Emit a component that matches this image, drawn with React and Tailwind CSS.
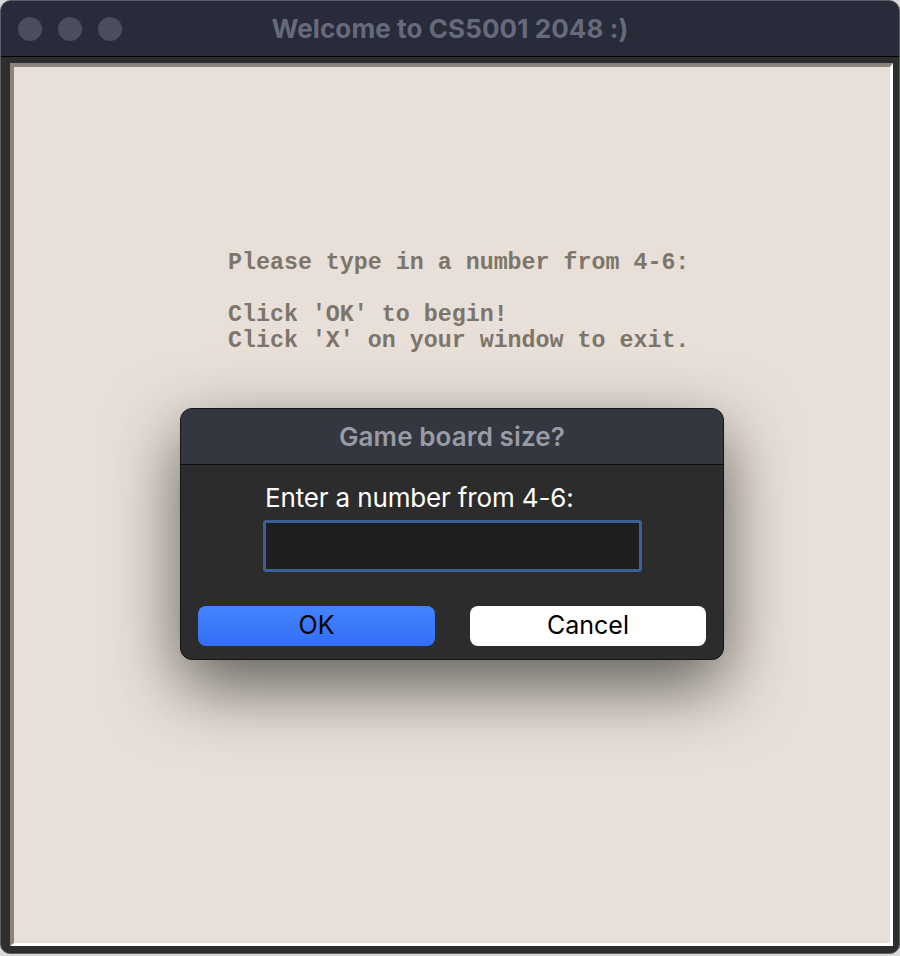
import React from "react";

const sans = { fontFamily: "Inter, 'Liberation Sans', sans-serif" };

const TrafficLight = () => <span className="w-6 h-6 rounded-full bg-[#4a4d5c]" />;

const SizeDialog = () => (
  <div
    className="absolute left-[180px] top-[408px] w-[544px] h-[252px] rounded-[12px] border border-[#151515] bg-[#2c2c2c] shadow-[0_26px_70px_rgba(0,0,0,0.6)] overflow-hidden flex flex-col"
    style={sans}
  >
    {/* Header */}
    <div className="h-[56px] bg-[#343640] border-b border-[#0e0e0e] flex items-center justify-center">
      <span className="text-[26px] font-semibold text-[#999ba5] tracking-[0.1px]">Game board size?</span>
    </div>

    {/* Body */}
    <div className="flex-1 flex flex-col pl-[82px] pt-[18px]">
      <span className="pl-[2px] text-[26px] leading-[30px] text-white tracking-[-0.15px]">Enter a number from 4-6:</span>
      <div className="mt-[7px] w-[379px] h-[52px] bg-[#1e1e1e] border-[3px] border-[#3e5f95] rounded-[3px]" />
    </div>

    {/* Buttons */}
    <div className="flex justify-between px-[17px] pb-[13px]">
      <button className="w-[237px] h-[40px] rounded-[8px] bg-gradient-to-b from-[#4383ff] to-[#336ff6] text-black text-[25px]">
        OK
      </button>
      <button className="w-[236px] h-[40px] rounded-[8px] bg-white text-black text-[25px]">
        Cancel
      </button>
    </div>
  </div>
);

export default function App() {
  return (
    <div className="w-[900px] h-[956px] bg-[#d9d9d9] relative overflow-hidden">
      <div className="w-[900px] h-[954px] rounded-t-[11px] rounded-b-[10px] border border-[#5c5e66] bg-[#2d2d2d] flex flex-col overflow-hidden">
        {/* Title bar */}
        <div className="h-[56px] bg-[#282b3a] border-b border-black flex items-center relative shrink-0">
          <div className="flex gap-4 pl-[17px]">
            <TrafficLight />
            <TrafficLight />
            <TrafficLight />
          </div>
          <div className="absolute inset-0 flex items-center justify-center pointer-events-none">
            <span className="text-[26px] font-bold text-[#676a7a] tracking-[0.1px]" style={sans}>
              Welcome to CS5001 2048 :)
            </span>
          </div>
        </div>

        {/* Frame */}
        <div className="flex-1 pt-[6px] pl-[9px] pr-[6px] pb-[7px] flex">
          <div className="flex-1 border-t-[4px] border-l-[4px] border-b-[3px] border-r-[3px] border-t-[#8a847c] border-l-[#8a847c] border-b-white border-r-white bg-[#e8e0d8]">
            <div
              className="pt-[183px] pl-[214px] text-[23.3px] leading-[26px] font-bold text-[#7d7569] whitespace-pre"
              style={{ fontFamily: "'Liberation Mono', 'Courier New', monospace" }}
            >
              {"Please type in a number from 4-6:\n\nClick 'OK' to begin!\nClick 'X' on your window to exit."}
            </div>
          </div>
        </div>
      </div>

      <SizeDialog />
    </div>
  );
}
